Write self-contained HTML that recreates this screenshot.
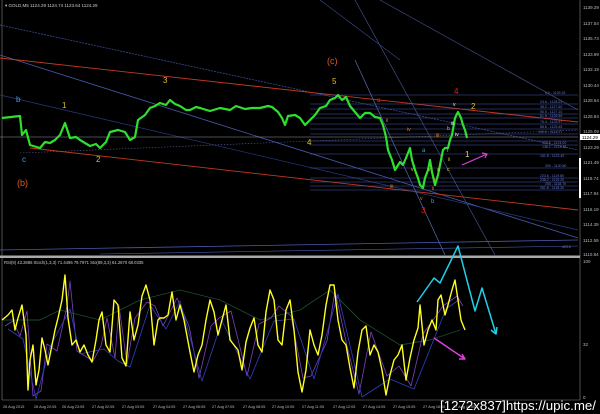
<!DOCTYPE html>
<html><head><meta charset="utf-8"><style>
html,body{margin:0;padding:0;background:#000;width:600px;height:414px;overflow:hidden}
svg{display:block}
text{font-family:"Liberation Sans",sans-serif}
</style></head><body>
<svg width="600" height="414" viewBox="0 0 600 414" xmlns="http://www.w3.org/2000/svg">
<rect width="600" height="414" fill="#000"/>
<line x1="2" y1="0" x2="2" y2="400" stroke="#888" stroke-width="0.6"/>
<line x1="580" y1="0" x2="580" y2="400" stroke="#888" stroke-width="0.6"/>
<rect x="579" y="158" width="2" height="40" fill="#fff"/>
<rect x="0" y="255.5" width="580" height="2.5" fill="#aaa"/>
<line x1="2" y1="400" x2="580" y2="400" stroke="#888" stroke-width="0.6"/>
<text x="5" y="7" font-size="4.5" fill="#ccc">▾ GOLD,M5  1124.29 1124.74 1123.64 1124.29</text>
<g font-size="4.5" fill="#bbb">
<text x="583" y="9">1139.29</text><text x="583" y="25">1137.54</text><text x="583" y="40">1135.74</text><text x="583" y="56">1133.99</text>
<text x="583" y="71">1132.19</text><text x="583" y="87">1130.44</text><text x="583" y="102">1128.64</text><text x="583" y="118">1126.84</text>
<text x="583" y="133">1125.09</text><text x="583" y="149">1123.29</text><text x="583" y="164">1121.49</text><text x="583" y="180">1119.74</text>
<text x="583" y="195">1117.94</text><text x="583" y="211">1116.19</text><text x="583" y="226">1114.39</text><text x="583" y="242">1112.59</text><text x="583" y="256">1110.84</text>
<text x="583" y="263">100</text><text x="583" y="346">32</text><text x="583" y="399">0</text>
</g>
<rect x="580" y="134" width="20" height="6" fill="#fff"/><text x="582" y="139" font-size="4.5" fill="#000">1124.29</text>
<g fill="none">
<line x1="0" y1="25" x2="578" y2="150" stroke="#3a4a90" stroke-width="0.8" stroke-dasharray="2,1"/>
<line x1="0" y1="55" x2="578" y2="238" stroke="#4a5ab0" stroke-width="0.8"/>
<line x1="0" y1="58" x2="578" y2="122" stroke="#c03a20" stroke-width="0.9"/>
<line x1="30" y1="148" x2="578" y2="210" stroke="#c03a20" stroke-width="0.9"/>
<line x1="0" y1="95" x2="578" y2="230" stroke="#2a3a80" stroke-width="0.7"/>
<line x1="20" y1="153" x2="578" y2="130" stroke="#555a90" stroke-width="0.6" stroke-dasharray="1.5,1.5"/>
<line x1="0" y1="250" x2="578" y2="240" stroke="#4a5ab0" stroke-width="0.8"/>
<line x1="100" y1="254" x2="578" y2="246" stroke="#4a5ab0" stroke-width="0.6"/>
<line x1="355" y1="60" x2="445" y2="255" stroke="#5a6ab0" stroke-width="0.7"/>
<line x1="355" y1="0" x2="495" y2="255" stroke="#4a5aa0" stroke-width="0.6"/>
<line x1="380" y1="0" x2="578" y2="110" stroke="#4a5aa0" stroke-width="0.6"/>
<line x1="320" y1="0" x2="400" y2="60" stroke="#3a4a90" stroke-width="0.6"/>
<line x1="0" y1="137" x2="578" y2="137" stroke="#999" stroke-width="0.6"/>
</g>
<g stroke="#4a5ab0" stroke-width="0.6">
<line x1="310" y1="95" x2="578" y2="95"/><line x1="310" y1="104" x2="578" y2="104"/><line x1="310" y1="109" x2="578" y2="109"/>
<line x1="310" y1="114" x2="578" y2="114"/><line x1="310" y1="118" x2="578" y2="118"/><line x1="310" y1="124" x2="578" y2="124"/>
<line x1="310" y1="129" x2="578" y2="129"/><line x1="310" y1="134" x2="578" y2="134"/><line x1="310" y1="141" x2="578" y2="141"/>
<line x1="310" y1="145" x2="578" y2="145"/><line x1="310" y1="154" x2="578" y2="154"/><line x1="310" y1="168" x2="578" y2="168"/>
<line x1="310" y1="178" x2="578" y2="178"/><line x1="310" y1="182" x2="578" y2="182"/><line x1="310" y1="186" x2="578" y2="186"/><line x1="310" y1="190" x2="578" y2="190"/>
</g>
<g font-size="3.5" fill="#6a7ad0">
<text x="545" y="94">0.0 - 1129.23</text><text x="540" y="103">23.6 - 1128.24</text><text x="540" y="108">38.2 - 1127.60</text>
<text x="540" y="113">50.0 - 1127.10</text><text x="540" y="117">61.8 - 1126.59</text><text x="540" y="123">76.4 - 1125.97</text>
<text x="540" y="128">88.6 - 1125.45</text><text x="538" y="133">100.0 - 1124.97</text><text x="542" y="144">123.6 - 1124.00</text>
<text x="542" y="148">138.2 - 1123.38</text><text x="540" y="157">161.8 - 1122.40</text><text x="545" y="167">200 - 1120.80</text>
<text x="540" y="177">223.6 - 1119.80</text><text x="540" y="181">238.2 - 1119.20</text><text x="545" y="185">250 - 1118.70</text><text x="540" y="189">261.8 - 1118.20</text>
<text x="562" y="248">423.6</text>
</g>
<polyline fill="none" stroke="#2ee02e" stroke-width="2.2" stroke-linejoin="round" points="2,118 20,116 22,135 26,130 30,145 40,148 45,142 50,143 55,140 60,135 65,123 70,138 76,137 80,140 90,146 96,144 100,148 106,142 110,132 118,130 125,132 130,140 135,137 138,120 145,115 150,108 155,106 160,103 166,105 170,100 175,104 180,106 186,110 190,110 196,107 200,108 210,111 220,108 230,110 236,106 245,109 252,108 260,108 268,106 272,107 278,112 282,118 285,125 288,116 295,115 300,118 305,125 310,120 315,115 320,108 326,106 330,100 335,98 338,95 342,100 346,97 350,106 355,112 360,118 365,113 370,113 375,117 380,118 383,125 386,137 388,150 392,160 395,170 400,162 403,165 406,158 410,148 412,160 415,170 418,178 420,185 423,188 425,178 428,170 430,160 432,172 435,185 438,175 440,165 443,150 445,148 448,148 450,140 452,135 455,118 458,112 461,118 463,125 465,130 467,138"/>
<g font-size="8" font-family="Liberation Serif">
<text x="16" y="102" fill="#3aa0e0">b</text>
<text x="22" y="162" fill="#3aa0e0">c</text>
<text x="17" y="186" fill="#e05a20" font-size="9">(b)</text>
<text x="62" y="108" fill="#e0c020">1</text>
<text x="96" y="162" fill="#e0c020">2</text>
<text x="163" y="83" fill="#e0c020">3</text>
<text x="307" y="145" fill="#e0c020">4</text>
<text x="332" y="84" fill="#e0c020">5</text>
<text x="327" y="64" fill="#e05a20" font-size="9">(c)</text>
<text x="377" y="102" fill="#e02020" font-size="6">a</text>
<text x="454" y="94" fill="#e02020">4</text>
<text x="471" y="109" fill="#e0c020">2</text>
<text x="421" y="213" fill="#e02020">3</text>
<text x="431" y="203" fill="#3aa0e0" font-size="6">b</text>
<text x="422" y="152" fill="#3aa0e0" font-size="6">a</text>
<text x="465" y="157" fill="#e0e040">1</text>
</g>
<g font-size="5" font-family="Liberation Serif" fill="#e08020">
<text x="386" y="122">ii</text><text x="407" y="131">iv</text><text x="436" y="137">iii</text><text x="390" y="188">iii</text>
<text x="433" y="181">iv</text><text x="432" y="190">ii</text><text x="451" y="125" fill="#eee">iii</text><text x="455" y="136" fill="#eee">iv</text>
<text x="420" y="200" fill="#e08020">v</text><text x="453" y="106" fill="#eee">v</text><text x="447" y="152" fill="#e0c020">i</text>
<text x="448" y="161" fill="#e0c020">ii</text><text x="437" y="171" fill="#e0c020">a</text><text x="447" y="171" fill="#e0c020">c</text>
<text x="411" y="171" fill="#e0c020">v</text><text x="428" y="171" fill="#e0c020">v</text><text x="447" y="130" fill="#e0c020">b</text>
</g>
<polyline points="462,165 487,154" fill="none" stroke="#e040e0" stroke-width="1.2"/>
<polyline points="482,153 487,154 485,158" fill="none" stroke="#e040e0" stroke-width="1.2"/>
<text x="4" y="264" font-size="4.2" fill="#ccc">RSI(9) 43.2886  Stoch(1,3,3) 71.4496 79.7971  Sto(89,3,3) 61.2670 68.0335</text>
<g fill="none" stroke-linejoin="round">
<polyline stroke="#1a4a2a" stroke-width="0.9" points="2,320 40,320 60,310 100,320 140,300 180,290 220,300 260,320 300,310 330,290 360,320 400,345 430,340 460,330"/>
<polyline stroke="#8040c0" stroke-width="0.8" transform="translate(5,6)" points="0,320 8,315 15,330 22,305 28,390 36,385 42,338 52,345 62,300 65,275 72,345 88,355 96,340 102,312 110,352 114,300 122,358 130,312 142,296 150,300 158,320 172,292 184,320 194,372 206,320 214,312 226,305 242,370 254,318 266,312 274,300 286,310 298,372 306,370 322,335 330,285 342,340 354,388 366,326 382,370 394,360 406,380 418,328 438,300 452,290 458,300"/>
<polyline stroke="#3040c0" stroke-width="0.8" transform="translate(8,9)" points="0,320 15,330 28,390 42,338 62,300 72,345 96,340 110,352 122,358 142,296 158,320 172,292 194,372 214,312 242,370 266,312 286,310 306,370 330,285 354,388 382,370 406,380 438,300 452,290"/>
<polyline stroke="#ffff20" stroke-width="1.4" points="2,320 8,315 12,310 15,330 18,318 22,305 26,335 28,390 30,360 33,345 36,385 39,370 42,338 45,350 48,365 52,345 55,330 58,318 62,300 65,275 68,318 72,345 76,340 80,352 84,345 88,355 92,362 96,340 99,320 102,312 106,345 110,352 114,300 118,305 122,358 126,366 130,312 134,340 138,325 142,296 146,285 150,300 154,345 158,320 160,318 164,318 168,315 172,292 176,320 180,305 184,320 190,352 194,372 198,355 202,345 206,320 210,300 214,312 218,335 222,320 226,305 230,340 234,345 238,350 242,370 246,342 250,328 254,318 258,345 262,352 266,312 270,290 274,300 278,340 282,345 286,310 290,300 294,330 298,372 302,392 306,370 310,330 314,345 318,355 322,335 326,305 330,285 334,285 338,320 342,340 346,345 350,368 354,388 358,352 362,330 366,326 370,355 374,345 378,352 382,370 386,395 390,375 394,360 398,355 402,345 406,380 410,358 414,340 418,328 420,305 424,345 428,330 432,320 436,330 438,300 441,295 445,315 448,305 452,290 455,280 458,300 461,320 465,330"/>
<polyline stroke="#20d0e8" stroke-width="1.5" points="417,302 434,278 440,283 458,246 475,311 482,288 496,334"/>
<polyline stroke="#20d0e8" stroke-width="1.5" points="491,330 496,334 497,327"/>
<polyline stroke="#e040e0" stroke-width="1.4" points="434,338 465,359"/>
<polyline stroke="#e040e0" stroke-width="1.4" points="459,359 465,359 462,354"/>
</g>
<g font-size="3.8" fill="#bbb">
<text x="3" y="408">26 Aug 2015</text><text x="34" y="408">26 Aug 22:05</text><text x="62" y="408">26 Aug 23:05</text><text x="92" y="408">27 Aug 02:05</text>
<text x="122" y="408">27 Aug 03:05</text><text x="153" y="408">27 Aug 04:05</text><text x="183" y="408">27 Aug 06:05</text><text x="212" y="408">27 Aug 07:05</text>
<text x="243" y="408">27 Aug 08:05</text><text x="272" y="408">27 Aug 10:05</text><text x="302" y="408">27 Aug 11:05</text><text x="333" y="408">27 Aug 12:05</text>
<text x="363" y="408">27 Aug 14:05</text><text x="393" y="408">27 Aug 15:05</text><text x="423" y="408">27 Aug 16:05</text><text x="453" y="408">27 Aug 18:05</text>
</g>
<text x="440" y="410" font-size="13" fill="#fff" font-family="Liberation Mono" textLength="156" lengthAdjust="spacingAndGlyphs">[1272x837]https://upic.me/</text>
</svg>
</body></html>
